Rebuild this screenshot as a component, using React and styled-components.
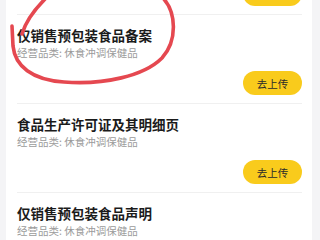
import React from 'react';
import styled, { createGlobalStyle } from 'styled-components';

const GlobalStyle = createGlobalStyle`
  html, body {
    margin: 0;
    padding: 0;
    background: #f4f4f6;
    font-family: "Noto Sans CJK SC", "Noto Sans", sans-serif;
  }
`;

const Page = styled.div`
  width: 320px;
  height: 240px;
  overflow: hidden;
  padding: 0 8px 0 6px;
  box-sizing: border-box;
  position: relative;
`;

// list is scrolled: only the tail of the previous item shows at the top
const Card = styled.div`
  background: #ffffff;
  margin-top: -18px;
  padding: 0 10px 0 11px;
  min-height: 300px;
`;

const Item = styled.div`
  display: flex;
  flex-direction: column;
  padding: ${(p) => (p.$tail ? '0 0 8px' : '10px 0 8px')};
  border-bottom: 1px solid #f0f0f0;
`;

const Title = styled.div`
  font-size: 13.5px;
  line-height: 20px;
  font-weight: 700;
  color: #1b1b1b;
  white-space: nowrap;
`;

const Sub = styled.div`
  margin-top: 1px;
  font-size: 10.5px;
  line-height: 14px;
  color: #9b9b9b;
  white-space: nowrap;
`;

const Actions = styled.div`
  display: flex;
  justify-content: flex-end;
  margin-top: ${(p) => (p.$tail ? '0' : '11px')};
`;

const UploadButton = styled.button`
  width: 59px;
  height: 24px;
  border: none;
  border-radius: 12px;
  background: #f9cb1c;
  color: #2a2a2a;
  font-family: inherit;
  font-size: 10.5px;
  padding: 0;
`;

const Scribble = styled.svg`
  position: absolute;
  left: 0;
  top: 0;
  pointer-events: none;
`;

const items = [
  { id: 1, name: '仅销售预包装食品备案', action: true },
  { id: 2, name: '食品生产许可证及其明细页', action: true },
  { id: 3, name: '仅销售预包装食品声明', action: false }, // button is below the fold
];

export default function App() {
  return (
    <>
      <GlobalStyle />
      <Page>
        <Card>
          <Item $tail>
            <Actions $tail>
              <UploadButton aria-label="去上传" />
            </Actions>
          </Item>
          {items.map((it) => (
            <Item key={it.id}>
              <Title>{it.name}</Title>
              <Sub>经营品类: 休食冲调保健品</Sub>
              {it.action && (
                <Actions>
                  <UploadButton>去上传</UploadButton>
                </Actions>
              )}
            </Item>
          ))}
        </Card>
        <Scribble width="320" height="240" viewBox="0 0 320 240">
          <g fill="none" stroke="#e54850" strokeWidth="3.6" strokeLinecap="round">
            <path d="M163 -2 C176 12, 178 40, 162 58 C144 76, 104 85, 64 82 C32 80, 15 66, 13 46 L12 26" />
            <path d="M46 -2 C36 8, 26 20, 22 34" />
          </g>
        </Scribble>
      </Page>
    </>
  );
}
